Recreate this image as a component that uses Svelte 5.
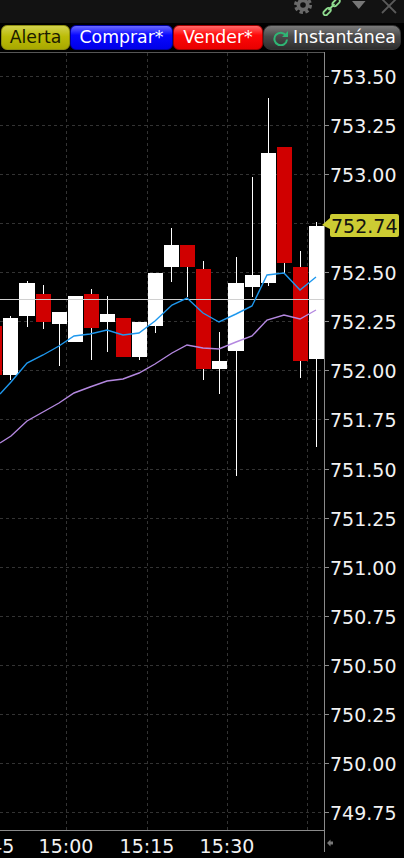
<script lang="ts">
  // left, right, body top, body bottom, wick top, wick bottom, wick x, red?
  const candles = [
    [-13, 2, 326, 375, 326, 375, -6, true],
    [3, 18, 318, 375, 316, 380, 10, false],
    [19, 35, 283, 316, 281, 327, 27, false],
    [36, 51, 294, 322, 285, 329, 43, true],
    [52, 67, 312, 324, 312, 366, 59, false],
    [68, 83, 296, 342, 296, 342, 75, false],
    [84, 99, 294, 328, 289, 360, 91, true],
    [100, 115, 314, 322, 296, 352, 107, false],
    [116, 131, 318, 357, 318, 357, 123, true],
    [132, 147, 322, 357, 322, 360, 139, false],
    [148, 163, 273, 326, 273, 333, 155, false],
    [164, 179, 245, 267, 228, 282, 171, false],
    [180, 195, 245, 267, 245, 297, 187, true],
    [196, 211, 269, 369, 261, 380, 203, true],
    [212, 227, 361, 369, 332, 394, 219, false],
    [228, 244, 283, 351, 257, 476, 236, false],
    [245, 260, 275, 287, 177, 297, 252, false],
    [261, 276, 153, 283, 98, 286, 268, false],
    [277, 292, 147, 263, 147, 273, 284, true],
    [293, 308, 267, 361, 251, 378, 300, true],
    [309, 324, 226, 359, 222, 447, 316, false]
  ];

  const blue = '0,394 11,382 27,363 43,355 59,346 74,336 90,334 107,330 123,335 139,333 155,321 172,305 187,298 203,313 219,322 236,314 252,306 267,275 284,273 300,290 316,277';
  const purple = '0,443 11,436 27,421 43,412 59,403 74,393 90,387 107,381 123,379 139,373 155,364 172,353 187,345 203,348 219,349 236,342 252,336 267,320 284,315 300,319 316,310';

  const prices = ['753.50', '753.25', '753.00', '752.75', '752.50', '752.25', '752.00', '751.75', '751.50', '751.25', '751.00', '750.75', '750.50', '750.25', '750.00', '749.75'];
  const priceY = (i: number) => Math.round(76 + i * 49.07);

  const times = [
    { x: -13, label: '14:45' },
    { x: 66, label: '15:00' },
    { x: 147, label: '15:15' },
    { x: 227, label: '15:30' }
  ];
</script>

<div class="screen">
  <div class="topbar">
    <svg class="gear" width="18" height="14" viewBox="0 0 18 14">
      <circle cx="9" cy="5" r="6.500" class="cog" />
      <circle cx="9" cy="5" r="7.500" class="teeth" />
      <circle cx="9" cy="5" r="2.800" class="hole" />
    </svg>
    <svg class="link" width="20" height="16" viewBox="0 0 20 16">
      <path d="M2 11.500 5 8.500a2.200 2.200 0 0 1 3.200 0 2.200 2.200 0 0 1 0 3.200l-3 3a2.200 2.200 0 0 1-3.200 0 2.200 2.200 0 0 1 0-3.200z" />
      <path d="M11 2.500 14 -.5a2.200 2.200 0 0 1 3.200 0 2.200 2.200 0 0 1 0 3.200l-3 3a2.200 2.200 0 0 1-3.200 0 2.200 2.200 0 0 1 0-3.200z" />
      <path d="M6.500 10 12.500 4" />
    </svg>
    <svg class="tri" width="14" height="9" viewBox="0 0 14 9">
      <path d="M0 1h13.500L6.800 9z" />
    </svg>
    <svg class="close" width="16" height="14" viewBox="0 0 16 14">
      <path d="M1 -1 15 13M15 -1 1 13" />
    </svg>
  </div>

  <div class="buttons">
    <button class="btn alert">Alerta</button>
    <button class="btn buy">Comprar*</button>
    <button class="btn sell">Vender*</button>
    <button class="btn snap">
      <svg width="16" height="16" viewBox="0 0 16 16">
        <path d="M13 5.500A6.300 6.300 0 1 0 14 9.500" class="arc" />
        <path d="M15 1v6H9z" class="head" />
      </svg>
      Instantánea
    </button>
  </div>

  <svg class="chart" width="404" height="808" viewBox="0 50 404 808">
    <line class="frame" x1="0" y1="52.500" x2="324" y2="52.500" />

    {#each prices as _, i}
      <line class="grid" x1="0" y1={priceY(i) + 0.5} x2="324" y2={priceY(i) + 0.5} />
    {/each}
    {#each [66, 147, 227, 307] as x}
      <line class="grid" x1={x + 0.5} y1="53" x2={x + 0.5} y2="830" />
    {/each}

    {#each candles as [l, r, top, bot, wt, wb, wx, red]}
      <rect class="wick" x={wx} y={wt} width="1" height={wb - wt} />
      <rect class={red ? 'body-red' : 'body'} x={l} y={top} width={r - l} height={bot - top} />
    {/each}

    <line class="last" x1="0" y1="299.500" x2="324" y2="299.500" />
    <polyline class="ma-blue" points={blue} />
    <polyline class="ma-purple" points={purple} />

    <line class="axis" x1="324.500" y1="52" x2="324.500" y2="852" />
    <line class="axis" x1="0" y1="830.500" x2="324" y2="830.500" />

    {#each prices as price, i}
      <line class="axis" x1="324" y1={priceY(i) + 0.5} x2="329" y2={priceY(i) + 0.5} />
      {#if price !== '752.75'}
        <text class="label" x="330" y={priceY(i) + 7.500}>{price}</text>
      {/if}
    {/each}

    {#each times as t}
      <text class="label" x={t.x} y="853" text-anchor="middle">{t.label}</text>
    {/each}

    <path class="corner" d="M327 843l3.500-3.500v2h2.500v3h-2.500v2z" />

    <path class="tag" d="M332 214h65a2 2 0 0 1 2 2v19a2 2 0 0 1-2 2h-65a2 2 0 0 1-2-2v-6l-8-4 8-7v-2a2 2 0 0 1 2-2z" />
    <text class="tag-text" x="331" y="233">752.74</text>
  </svg>
</div>

<style>
  :global(body) {
    margin: 0;
    background: #000;
  }

  .screen {
    width: 404px;
    height: 858px;
    overflow: hidden;
    background: #000;
    font-family: "DejaVu Sans", sans-serif;
  }

  .topbar {
    height: 23px;
    background: #121212;
    display: flex;
    justify-content: flex-end;
    align-items: flex-start;
    padding-right: 7px;
    box-sizing: border-box;
  }

  .topbar svg {
    display: block;
    overflow: hidden;
  }

  .gear {
    margin-right: 10px;
  }

  .gear .cog {
    fill: #6a6a6a;
  }

  .gear .teeth {
    fill: none;
    stroke: #6a6a6a;
    stroke-width: 3;
    stroke-dasharray: 3.400 2.490;
  }

  .gear .hole {
    fill: #121212;
  }

  .link {
    margin-right: 10px;
    fill: none;
    stroke: #8fdc8f;
    stroke-width: 1.800;
  }

  .tri {
    margin-right: 15px;
    fill: #777;
  }

  .close {
    fill: none;
    stroke: #5a5a5a;
    stroke-width: 1.800;
  }

  .buttons {
    display: flex;
    height: 25px;
    margin-top: 2px;
    padding-left: 1px;
  }

  .btn {
    display: flex;
    align-items: center;
    justify-content: center;
    height: 25px;
    padding: 0;
    border: 1px solid transparent;
    border-radius: 6px;
    box-sizing: border-box;
    font-family: inherit;
    font-size: 17.300px;
    line-height: 1;
    color: #fff;
  }

  .alert {
    width: 69px;
    color: #1c1c00;
    background: linear-gradient(#d2d24e, #bcbc08 45%, #a8a800);
    border-color: #8e8e10;
  }

  .buy {
    width: 103px;
    background: linear-gradient(#6a6aff, #0808ff 40%, #0000e8);
    border-color: #0000a0;
  }

  .sell {
    width: 90px;
    background: linear-gradient(#ff6a6a, #ff0808 40%, #e80000);
    border-color: #a00000;
  }

  .snap {
    width: 138px;
    gap: 4px;
    justify-content: flex-start;
    padding-left: 9px;
    border-radius: 8px;
    background: linear-gradient(#7a7a7a, #4a4a4a 45%, #2e2e2e);
    border-color: #333;
  }

  .snap .arc {
    fill: none;
    stroke: #2fb574;
    stroke-width: 2;
  }

  .snap .head {
    fill: #2fb574;
  }

  .chart {
    display: block;
  }

  .frame {
    stroke: #555;
  }

  .grid {
    stroke: #333;
    stroke-dasharray: 3 3;
  }

  .axis {
    stroke: #8a8a8a;
  }

  .body,
  .wick {
    fill: #fff;
    shape-rendering: crispEdges;
  }

  .body-red {
    fill: #d00000;
    shape-rendering: crispEdges;
  }

  .last {
    stroke: #d0d0d0;
  }

  .ma-blue,
  .ma-purple {
    fill: none;
    stroke-width: 1.400;
  }

  .ma-blue {
    stroke: #1e98ee;
  }

  .ma-purple {
    stroke: #b488e0;
  }

  .label {
    font-size: 19px;
    fill: #f2f2f2;
  }

  .corner {
    fill: #777;
  }

  .tag {
    fill: #cccc33;
  }

  .tag-text {
    font-size: 19px;
    fill: #111;
  }
</style>
